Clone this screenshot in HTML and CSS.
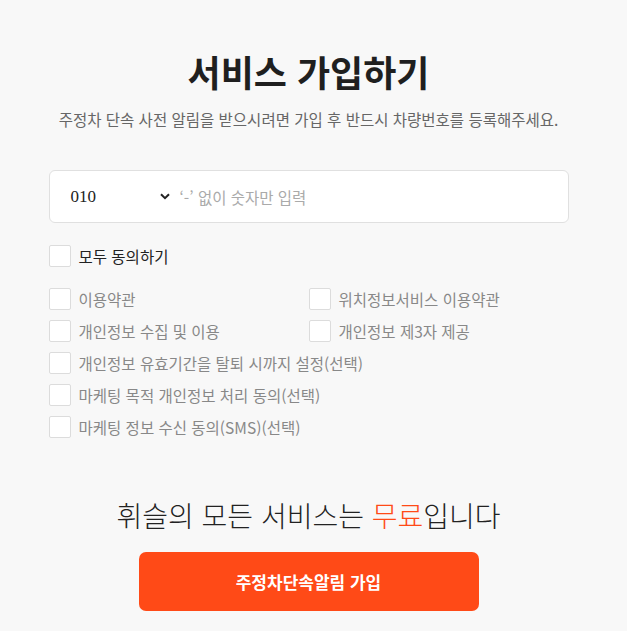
FILE: index.html
```html
<!DOCTYPE html>
<html lang="ko">
<head>
    <meta charset="UTF-8">
    <meta name="viewport" content="width=device-width, initial-scale=1.0">
    <title>서비스 가입하기</title>
    <link rel="stylesheet" href="styles.css">
</head>
<body>

    <div class="container">
        <h2>서비스 가입하기</h2>
        <p class="desc">주정차 단속 사전 알림을 받으시려면 가입 후 반드시 차량번호를 등록해주세요.</p>

        <form>
            <div class="phone">
                <div class="prefix">
                    <span>010</span>
                    <svg width="10" height="7" viewBox="0 0 10 7"><path d="M1 1.2 L5 5.2 L9 1.2" fill="none" stroke="#222" stroke-width="2"/></svg>
                </div>
                <input type="text" name="phone" placeholder="‘-’ 없이 숫자만 입력">
            </div>

            <label class="check all"><span class="box"></span>모두 동의하기</label>

            <div class="terms">
                <label class="check"><span class="box"></span>이용약관</label>
                <label class="check"><span class="box"></span>위치정보서비스 이용약관</label>
                <label class="check"><span class="box"></span>개인정보 수집 및 이용</label>
                <label class="check"><span class="box"></span>개인정보 제3자 제공</label>
                <label class="check wide"><span class="box"></span>개인정보 유효기간을 탈퇴 시까지 설정(선택)</label>
                <label class="check wide"><span class="box"></span>마케팅 목적 개인정보 처리 동의(선택)</label>
                <label class="check wide"><span class="box"></span>마케팅 정보 수신 동의(SMS)(선택)</label>
            </div>

            <p class="free">휘슬의 모든 서비스는 <em>무료</em>입니다</p>
            <button type="submit">주정차단속알림 가입</button>
        </form>
    </div>

</body>
</html>
```

FILE: styles.css
```css
body {
    margin: 0;
    padding-right: 10px;
    background: #f8f8f8;
    font-family: "Noto Sans CJK KR", "Noto Sans", sans-serif;
    color: #222;
}

.container {
    width: 520px;
    margin: 0 auto;
    padding-top: 43px;
}

h2 {
    margin: 0;
    text-align: center;
    font-size: 36px;
    font-weight: bold;
    line-height: 56px;
    color: #1f1f1f;
}

.desc {
    margin: 9px 0 0;
    text-align: center;
    font-size: 15.5px;
    color: #666;
    line-height: 22px;
}

form {
    display: flex;
    flex-direction: column;
}

.phone {
    display: flex;
    align-items: center;
    height: 53px;
    margin-top: 40px;
    background: #fff;
    border: 1px solid #e0e0e0;
    border-radius: 6px;
    box-sizing: border-box;
}

.prefix {
    display: flex;
    align-items: center;
    width: 128px;
    padding-left: 21px;
    box-sizing: border-box;
    font-family: "Liberation Serif", serif;
    font-size: 17px;
    color: #222;
}

.prefix span {
    flex: 1;
}

.prefix svg {
    margin-right: 8px;
}

.phone input {
    flex: 1;
    border: none;
    outline: none;
    background: none;
    padding: 0 0 0 2px;
    font-family: "Noto Sans CJK KR", sans-serif;
    font-size: 15.5px;
}

.phone input::placeholder {
    color: #aaa;
}

.check {
    display: flex;
    align-items: center;
    gap: 8px;
    font-size: 15.5px;
    color: #888;
    height: 22px;
}

.box {
    width: 22px;
    height: 22px;
    box-sizing: border-box;
    background: #fff;
    border: 1px solid #dcdcdc;
    border-radius: 2px;
}

.check.all {
    margin-top: 22px;
    color: #222;
}

.terms {
    display: grid;
    grid-template-columns: 260px 1fr;
    row-gap: 10px;
    margin-top: 21px;
}

.check.wide {
    grid-column: 1 / 3;
}

.free {
    margin: 58px 0 0;
    text-align: center;
    font-size: 28px;
    font-weight: 300;
    line-height: 38px;
    color: #222;
}

.free em {
    font-style: normal;
    color: #ff4a17;
}

button {
    align-self: center;
    width: 340px;
    height: 59px;
    margin-top: 18px;
    border: none;
    border-radius: 7px;
    background: #ff4a17;
    color: #fff;
    font-family: "Noto Sans CJK KR", sans-serif;
    font-size: 17px;
    font-weight: bold;
    cursor: pointer;
}
```
